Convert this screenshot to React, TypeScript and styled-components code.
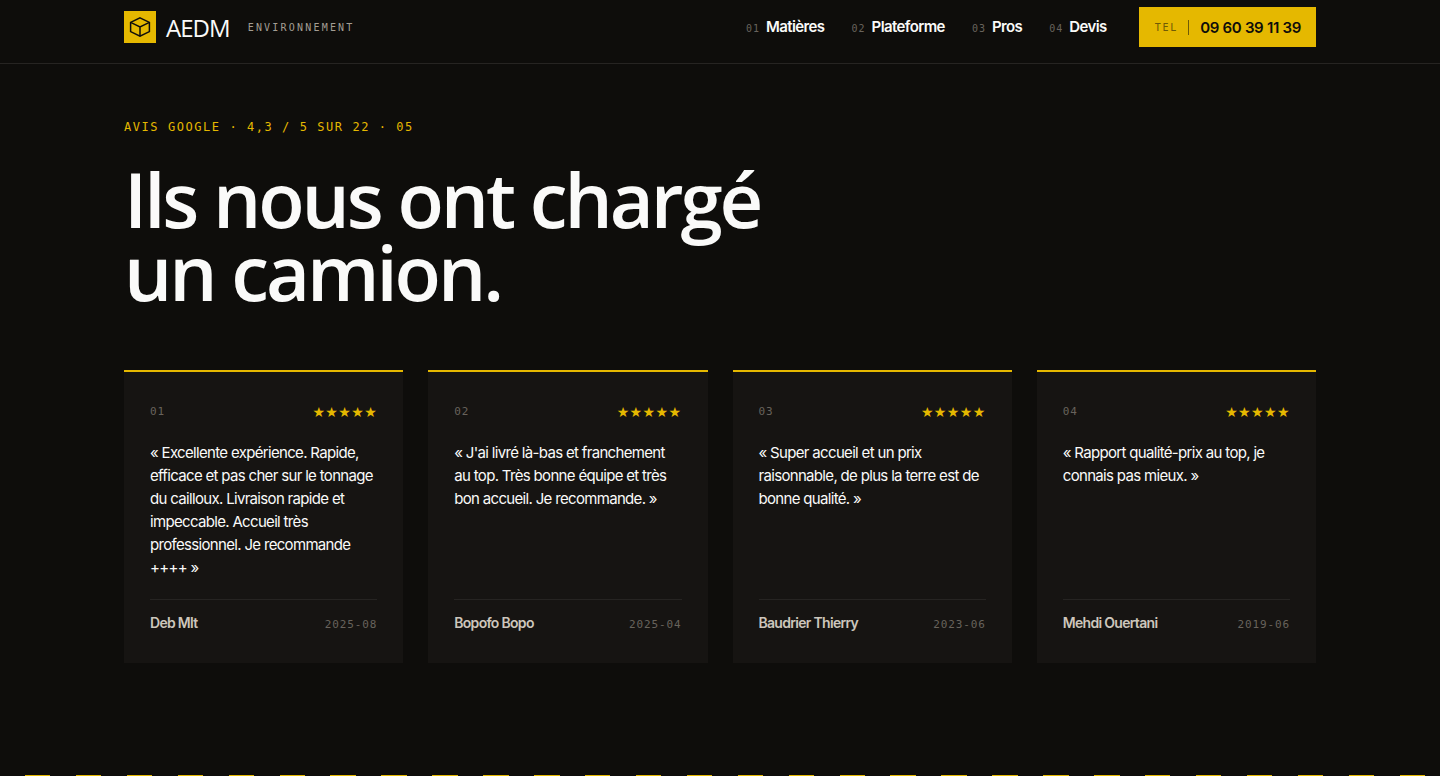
import React from "react";
import styled, { createGlobalStyle } from "styled-components";

const color = {
  ink: "#0e0d0b",
  panel: "#161412",
  line: "#262422",
  yellow: "#e5b800",
  white: "#fafaf9",
  sand: "#cdc6bc",
  muted: "#a39d93",
  dim: "#68635c",
};

const sans = `Inter, "Liberation Sans", sans-serif`;
const display = `"Open Sans", "Noto Sans", sans-serif`;
const mono = `"DejaVu Sans Mono", "Liberation Mono", monospace`;

const GlobalStyle = createGlobalStyle`
  *, *::before, *::after { box-sizing: border-box; }
  body {
    margin: 0;
    background: ${color.ink};
    color: ${color.white};
    font-family: ${sans};
  }
  a { color: inherit; text-decoration: none; }
`;

const Container = styled.div`
  width: 100%;
  max-width: 1240px;
  margin: 0 auto;
  padding: 0 24px;
`;

const Header = styled.header`
  border-bottom: 1px solid ${color.line};
  padding: 7px 0 16px;
`;

const HeaderRow = styled(Container)`
  display: flex;
  align-items: center;
  justify-content: space-between;
`;

const Brand = styled.a`
  display: flex;
  align-items: center;
`;

const LogoMark = styled.span`
  display: grid;
  place-items: center;
  width: 32px;
  height: 32px;
  margin-right: 10px;
  background: ${color.yellow};
  color: ${color.ink};
`;

const BrandName = styled.span`
  padding-top: 2px;
  font-family: ${display};
  font-size: 24px;
  line-height: 32px;
  letter-spacing: -0.04em;
`;

const BrandTag = styled.span`
  margin-left: 18px;
  padding-top: 2px;
  font-family: ${mono};
  font-size: 10px;
  line-height: 16px;
  letter-spacing: 0.22em;
  text-transform: uppercase;
  color: ${color.muted};
`;

const Nav = styled.nav`
  display: flex;
  align-items: center;
  gap: 27px;
`;

const NavLink = styled.a`
  display: flex;
  align-items: baseline;
  gap: 6px;
  padding-top: 1px;
  font-size: 15px;
  line-height: 24px;
  font-weight: 600;
  letter-spacing: -0.04em;
`;

const NavIndex = styled.span`
  font-family: ${mono};
  font-size: 10px;
  font-weight: 400;
  letter-spacing: 0.1em;
  color: ${color.dim};
`;

const PhoneButton = styled.a`
  display: flex;
  align-items: center;
  height: 40px;
  margin-left: 5px;
  padding: 0 15px 0 16px;
  background: ${color.yellow};
  color: ${color.ink};
  font-size: 15px;
  font-weight: 600;
  letter-spacing: -0.02em;
`;

const PhoneLabel = styled.span`
  margin-right: 11px;
  padding-right: 10px;
  border-right: 1px solid #6f5b06;
  font-family: ${mono};
  font-size: 10px;
  line-height: 15px;
  font-weight: 400;
  letter-spacing: 0.18em;
  color: #6f5b06;
`;

const Reviews = styled.section`
  padding: 53px 0 112px;
`;

const Eyebrow = styled.p`
  margin: 0 0 25px;
  font-family: ${mono};
  font-size: 12px;
  line-height: 20px;
  letter-spacing: 0.13em;
  text-transform: uppercase;
  color: ${color.yellow};
`;

const Title = styled.h2`
  margin: 0 0 62px;
  font-family: ${display};
  font-size: 76px;
  line-height: 73px;
  font-weight: 600;
  letter-spacing: -0.04em;
`;

const Grid = styled.ul`
  display: grid;
  grid-template-columns: repeat(4, minmax(0, 1fr));
  gap: 25px;
  margin: 0;
  padding: 0;
  list-style: none;
`;

const Card = styled.li`
  display: flex;
  flex-direction: column;
  padding: 30px 26px 28px;
  border-top: 2px solid ${color.yellow};
  background: ${color.panel};
`;

const CardRow = styled.div`
  display: flex;
  align-items: center;
  justify-content: space-between;
`;

const Small = styled.span`
  font-family: ${mono};
  font-size: 11px;
  line-height: 20px;
  letter-spacing: 0.08em;
  color: ${color.dim};
`;

const Stars = styled.span`
  font-family: "DejaVu Sans", sans-serif;
  font-size: 14px;
  line-height: 20px;
  letter-spacing: 0.03em;
  color: ${color.yellow};
`;

const Quote = styled.blockquote`
  flex: 1;
  margin: 19px 0 20px;
  font-size: 15px;
  line-height: 23px;
  letter-spacing: -0.045em;
`;

const CardFooter = styled(CardRow)`
  align-items: baseline;
  padding-top: 13px;
  border-top: 1px solid ${color.line};
`;

const Author = styled.cite`
  font-size: 14px;
  line-height: 20px;
  font-style: normal;
  font-weight: 600;
  letter-spacing: -0.05em;
  color: ${color.sand};
`;

const Hazard = styled.div`
  height: 14px;
  background: repeating-linear-gradient(
    135deg,
    ${color.ink} 0 18px,
    ${color.yellow} 18px 36px
  );
`;

const links = [
  { label: "Matières", href: "#matieres" },
  { label: "Plateforme", href: "#plateforme" },
  { label: "Pros", href: "#pros" },
  { label: "Devis", href: "#devis" },
];

const reviews = [
  {
    quote:
      "Excellente expérience. Rapide, efficace et pas cher sur le tonnage du cailloux. Livraison rapide et impeccable. Accueil très professionnel. Je recommande ++++",
    author: "Deb Mlt",
    date: "2025-08",
  },
  {
    quote:
      "J'ai livré là-bas et franchement au top. Très bonne équipe et très bon accueil. Je recommande.",
    author: "Bopofo Bopo",
    date: "2025-04",
  },
  {
    quote:
      "Super accueil et un prix raisonnable, de plus la terre est de bonne qualité.",
    author: "Baudrier Thierry",
    date: "2023-06",
  },
  {
    quote: "Rapport qualité-prix au top, je connais pas mieux.",
    author: "Mehdi Ouertani",
    date: "2019-06",
  },
];

const pad = (n: number) => String(n).padStart(2, "0");

const CubeIcon = () => (
  <svg
    width="22"
    height="22"
    viewBox="0 0 22 22"
    fill="none"
    stroke="currentColor"
    strokeWidth="1.5"
    strokeLinejoin="miter"
    aria-hidden="true"
  >
    <path d="M11 1.8 20.4 6.4V15.6L11 20.2 1.6 15.6V6.4Z" />
    <path d="M1.6 6.4 11 11l9.4-4.6M11 11v9.2" />
  </svg>
);

export default function App() {
  return (
    <>
      <GlobalStyle />
      <Header>
        <HeaderRow>
          <Brand href="#accueil">
            <LogoMark>
              <CubeIcon />
            </LogoMark>
            <BrandName>AEDM</BrandName>
            <BrandTag>Environnement</BrandTag>
          </Brand>
          <Nav>
            {links.map((link, i) => (
              <NavLink key={link.href} href={link.href}>
                <NavIndex>{pad(i + 1)}</NavIndex>
                {link.label}
              </NavLink>
            ))}
            <PhoneButton href="tel:+33960391139">
              <PhoneLabel>TEL</PhoneLabel>
              09 60 39 11 39
            </PhoneButton>
          </Nav>
        </HeaderRow>
      </Header>
      <main>
        <Reviews>
          <Container>
            <Eyebrow>Avis Google · 4,3 / 5 sur 22 · 05</Eyebrow>
            <Title>
              Ils nous ont chargé
              <br />
              un camion.
            </Title>
            <Grid>
              {reviews.map((review, i) => (
                <Card key={review.author}>
                  <CardRow>
                    <Small>{pad(i + 1)}</Small>
                    <Stars role="img" aria-label="5 étoiles sur 5">
                      ★★★★★
                    </Stars>
                  </CardRow>
                  <Quote>{`«\u00a0${review.quote}\u00a0»`}</Quote>
                  <CardFooter>
                    <Author>{review.author}</Author>
                    <Small as="time">{review.date}</Small>
                  </CardFooter>
                </Card>
              ))}
            </Grid>
          </Container>
        </Reviews>
        <Hazard />
      </main>
    </>
  );
}
